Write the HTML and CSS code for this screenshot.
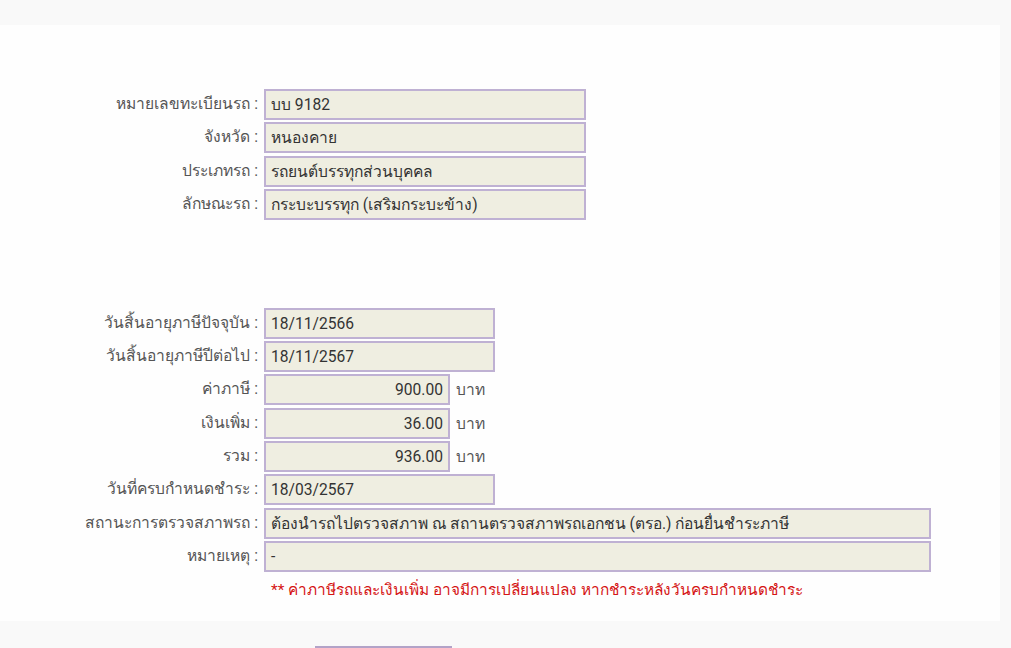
FILE: index.html
```html
<!DOCTYPE html>
<html lang="th">
<head>
<meta charset="utf-8">
<title>ข้อมูลรถ</title>
<link rel="stylesheet" href="styles.css">
</head>
<body>
<div class="panel">
  <div class="form">
    <div class="label">หมายเลขทะเบียนรถ :</div><div class="field"><div class="box w-md">บบ 9182</div></div>
    <div class="label">จังหวัด :</div><div class="field"><div class="box w-md">หนองคาย</div></div>
    <div class="label">ประเภทรถ :</div><div class="field"><div class="box w-md">รถยนต์บรรทุกส่วนบุคคล</div></div>
    <div class="label">ลักษณะรถ :</div><div class="field"><div class="box w-md">กระบะบรรทุก (เสริมกระบะข้าง)</div></div>
  </div>
  <div class="form group2">
    <div class="label">วันสิ้นอายุภาษีปัจจุบัน :</div><div class="field"><div class="box w-date">18/11/2566</div></div>
    <div class="label">วันสิ้นอายุภาษีปีต่อไป :</div><div class="field"><div class="box w-date">18/11/2567</div></div>
    <div class="label">ค่าภาษี :</div><div class="field"><div class="box w-amt num">900.00</div><span class="unit">บาท</span></div>
    <div class="label">เงินเพิ่ม :</div><div class="field"><div class="box w-amt num">36.00</div><span class="unit">บาท</span></div>
    <div class="label">รวม :</div><div class="field"><div class="box w-amt num">936.00</div><span class="unit">บาท</span></div>
    <div class="label">วันที่ครบกำหนดชำระ :</div><div class="field"><div class="box w-date">18/03/2567</div></div>
    <div class="label">สถานะการตรวจสภาพรถ :</div><div class="field"><div class="box w-long">ต้องนำรถไปตรวจสภาพ ณ สถานตรวจสภาพรถเอกชน (ตรอ.) ก่อนยื่นชำระภาษี</div></div>
    <div class="label">หมายเหตุ :</div><div class="field"><div class="box w-long">-</div></div>
    <div class="label"></div><div class="note">** ค่าภาษีรถและเงินเพิ่ม อาจมีการเปลี่ยนแปลง หากชำระหลังวันครบกำหนดชำระ</div>
  </div>
</div>
<div class="footer">
  <div class="btn-box"></div>
</div>
</body>
</html>
```

FILE: styles.css
```css
html, body {
  margin: 0;
  padding: 0;
  background: #f9f9f9;
  font-family: Roboto, "Noto Sans", "DejaVu Sans", sans-serif;
  font-size: 15.6px;
  color: #333;
}
.panel {
  margin-top: 25px;
  width: 1000px;
  height: 596px;
  box-sizing: border-box;
  background: #fefefe;
  padding-top: 64px;
}
.form {
  display: grid;
  grid-template-columns: 258px auto;
  column-gap: 6px;
  row-gap: 2.3px;
  align-items: center;
}
.group2 {
  margin-top: 88px;
}
.label {
  text-align: right;
  color: #555;
  white-space: nowrap;
  line-height: 31px;
}
.field {
  display: flex;
  align-items: center;
  gap: 6px;
}
.box {
  box-sizing: border-box;
  height: 31px;
  line-height: 28px;
  border: 2px solid #bfb1d3;
  background: #efeee1;
  padding: 0 5px;
  color: #333;
  white-space: nowrap;
  overflow: hidden;
}
.w-md { width: 322px; }
.w-date { width: 231px; }
.w-amt { width: 186px; }
.w-long { width: 667px; }
.num { text-align: right; }
.unit { color: #555; }
.note {
  color: #d51515;
  font-size: 15.4px;
  padding-left: 7px;
  line-height: 30px;
  margin-top: 1px;
}
.footer {
  padding-top: 25px;
  padding-left: 315px;
}
.btn-box {
  width: 137px;
  height: 30px;
  box-sizing: border-box;
  border: 2px solid #b3a3c8;
  background: #efeee1;
}
```
